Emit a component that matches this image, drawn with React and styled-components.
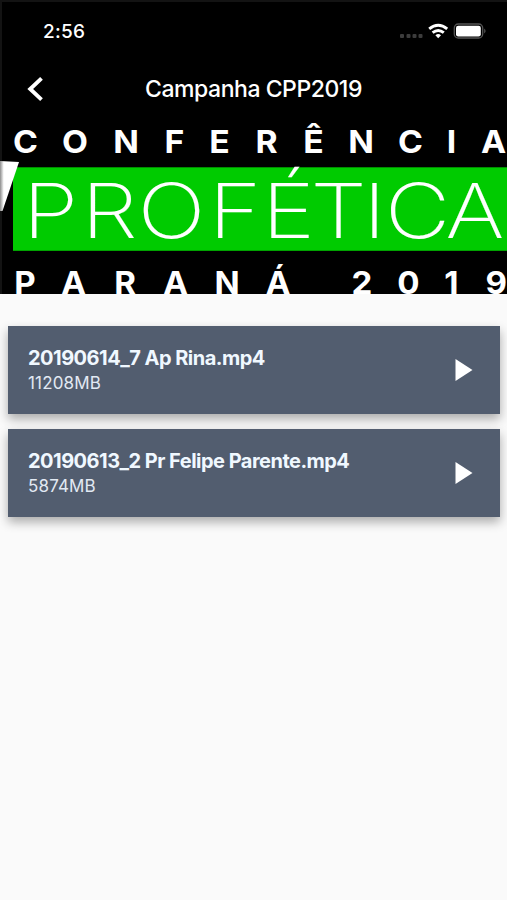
import React from 'react'
import styled, { createGlobalStyle } from 'styled-components'

const videos = [
  { name: '20190614_7 Ap Rina.mp4', size: '11208MB' },
  { name: '20190613_2 Pr Felipe Parente.mp4', size: '5874MB' },
]

const App = () => {
  return (
    <Screen>
      <GlobalStyle />
      <Header>
        <StatusBar>
          <Time>2:56</Time>
          <StatusIcons />
        </StatusBar>
        <NavBar>
          <BackButton aria-label="Voltar">
            <svg width="17" height="26" viewBox="0 0 17 26">
              <path
                d="M14.5 2.3 L3.2 13 L14.5 23.7"
                fill="none"
                stroke="#fff"
                strokeWidth="3.9"
              />
            </svg>
          </BackButton>
          <Title>Campanha CPP2019</Title>
        </NavBar>
        <Banner />
      </Header>
      <List>
        {videos.map((v) => (
          <Card key={v.name}>
            <div>
              <Name>{v.name}</Name>
              <Size>{v.size}</Size>
            </div>
            <svg width="18" height="22" viewBox="0 0 18 22">
              <path d="M0.5 0 L17.5 11 L0.5 22 Z" fill="#fff" />
            </svg>
          </Card>
        ))}
      </List>
    </Screen>
  )
}

const StatusIcons = () => (
  <svg width="88" height="20" viewBox="399 21 88 20">
    <g fill="#3c3c3c">
      <rect x="400" y="34" width="4" height="4" rx="1" />
      <rect x="406.5" y="34" width="4" height="4" rx="1" />
      <rect x="412.5" y="34" width="4" height="4" rx="1" />
      <rect x="418.5" y="34" width="4" height="4" rx="1" />
    </g>
    <g fill="none" stroke="#fff" strokeWidth="2.9">
      <path d="M429.2 28.9 Q438.2 21.6 447.2 28.9" />
      <path d="M432.6 32.7 Q438.2 28.2 443.8 32.7" />
    </g>
    <path d="M435.4 35.2 Q438.2 33 441 35.2 L438.2 38.2 Z" fill="#fff" />
    <rect x="454.3" y="24" width="28.4" height="14" rx="4" fill="none" stroke="#555" strokeWidth="1.3" />
    <rect x="456" y="25.8" width="24.8" height="10.6" rx="2.2" fill="#fff" />
    <path d="M484.2 28.6 Q487 31 484.2 33.6 Z" fill="#555" />
  </svg>
)

// letras espaçadas: cada letra fica centrada no seu ponto
const Spaced = ({ centers, wide, children, ...rest }) => (
  <ArtText
    transform={`scale(${wide} 1)`}
    x={centers.map((c) => (c / wide).toFixed(2)).join(' ')}
    {...rest}
  >
    {children}
  </ArtText>
)

// arte da campanha
const Banner = () => (
  <Art width="507" height="172" viewBox="0 122 507 172">
    <defs>
      <linearGradient id="wedge" x1="0" x2="1" y1="0" y2="0">
        <stop offset="0" stopColor="#8c8c8c" />
        <stop offset="0.2" stopColor="#fff" />
      </linearGradient>
    </defs>
    <rect x="13" y="167.3" width="494" height="83.5" fill="#00cb00" />
    <path d="M0 161 L19 162 L2.5 211 L0 211 Z" fill="url(#wedge)" />
    <Spaced
      y="153"
      wide={1.07}
      $size={31.5}
      $weight={700}
      centers={[25.5, 75, 126, 174.5, 219.5, 266.5, 313.5, 361, 410.5, 451.5, 493.5]}
    >
      CONFERÊNCIA
    </Spaced>
    <Spaced
      y="238"
      wide={1.18}
      $size={76}
      $weight={200}
      $outline={0.1}
      centers={[50.5, 109.5, 171.5, 235, 288.5, 338.5, 374.5, 417.5, 475]}
    >
      PROFÉTICA
    </Spaced>
    <Spaced
      y="293.8"
      wide={1.05}
      $size={31.5}
      $weight={700}
      centers={[25, 73.5, 125, 175.5, 227, 278, 320, 362, 408.5, 451.5, 496.3]}
    >
      PARANÁ 2019
    </Spaced>
  </Art>
)

const GlobalStyle = createGlobalStyle`
  body {
    margin: 0;
    background: #fafafa;
    font-family: Inter, 'Liberation Sans', sans-serif;
  }
`
const Screen = styled.div`
  width: 507px;
  height: 900px;
  overflow: hidden;
  background: #fafafa;
`
const Header = styled.header`
  height: 294px;
  box-sizing: border-box;
  background: #000;
  color: #fff;
  box-shadow: inset 2px 2px 0 #131313;
`
const StatusBar = styled.div`
  display: flex;
  justify-content: space-between;
  align-items: center;
  height: 62px;
  padding: 0 20px 0 43px;
`
const Time = styled.span`
  font-size: 19px;
  font-weight: 500;
  letter-spacing: 0.3px;
`
const NavBar = styled.div`
  display: grid;
  grid-template-columns: 44px 1fr 44px;
  align-items: center;
  height: 60px;
  padding: 0 0 6px;
  box-sizing: border-box;
`
const BackButton = styled.button`
  display: flex;
  justify-content: flex-end;
  padding: 0;
  border: 0;
  background: none;
`
const Title = styled.h1`
  margin: 0;
  text-align: center;
  font-size: 23px;
  font-weight: 500;
  letter-spacing: -0.45px;
`
const Art = styled.svg`
  display: block;
`
const ArtText = styled.text`
  font-size: ${(p) => p.$size}px;
  font-weight: ${(p) => p.$weight};
  fill: #fff;
  stroke: #fff;
  stroke-width: ${(p) => p.$outline || 0};
  text-anchor: middle;
`
const List = styled.div`
  display: flex;
  flex-direction: column;
  gap: 15px;
  padding: 32px 7px 0 8px;
`
const Card = styled.div`
  display: flex;
  justify-content: space-between;
  align-items: center;
  height: 88px;
  box-sizing: border-box;
  padding: 0 27px 0 20px;
  background: #525d6f;
  color: #f0f8ff;
  box-shadow: 0 5px 10px rgba(0, 0, 0, 0.32);
`
const Name = styled.div`
  font-size: 20px;
  font-weight: 700;
  line-height: 26px;
  letter-spacing: -0.52px;
`
const Size = styled.div`
  font-size: 17px;
  line-height: 24px;
  letter-spacing: 0.15px;
  color: #e2e9f3;
`

export default App
